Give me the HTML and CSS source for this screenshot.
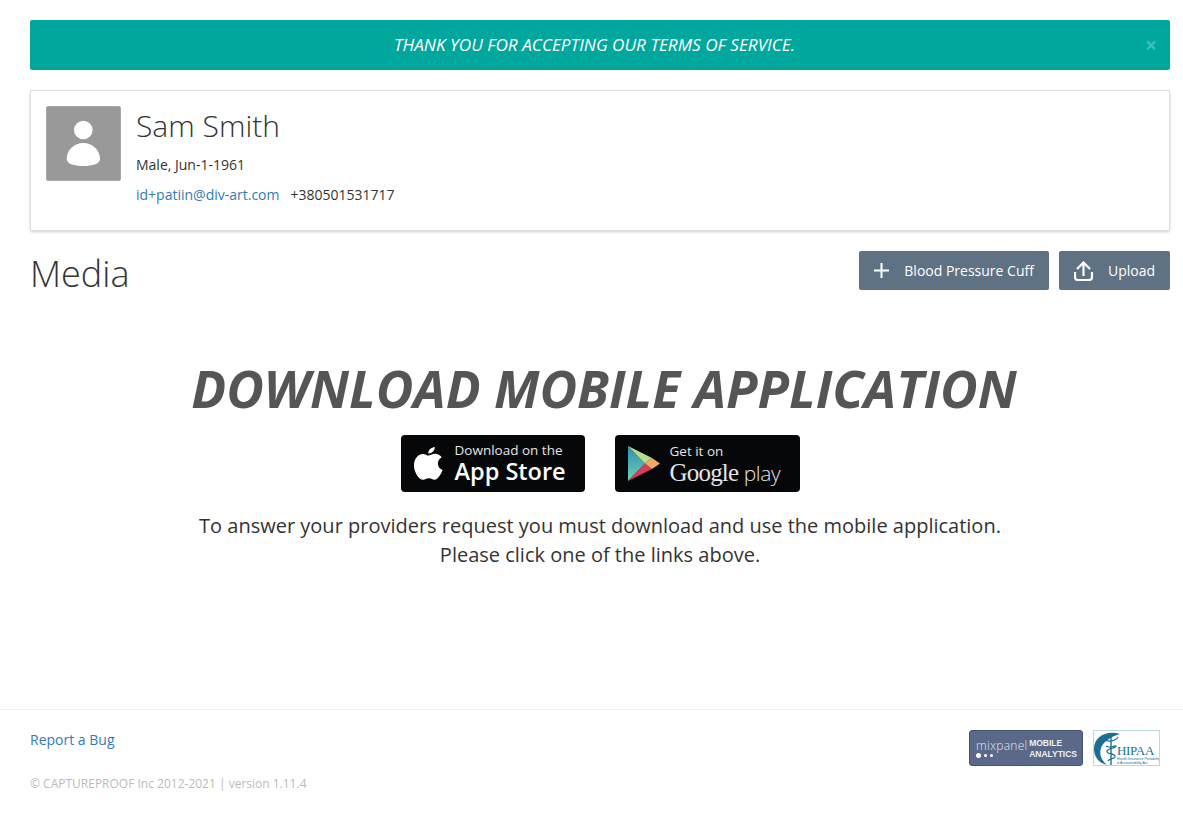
FILE: index.html
```html
<!DOCTYPE html>
<html lang="en">
<head>
    <meta charset="UTF-8">
    <meta name="viewport" content="width=device-width, initial-scale=1.0">
    <title>Media</title>
    <link rel="stylesheet" href="styles.css">
</head>
<body>
    <div class="page">
        <div class="alert">
            <span class="alert-text">THANK YOU FOR ACCEPTING OUR TERMS OF SERVICE.</span>
            <span class="alert-close">&times;</span>
        </div>

        <div class="patient-card">
            <div class="avatar">
                <svg width="73" height="73" viewBox="1 1 73 73">
                    <circle cx="37.300" cy="24" r="9.300" fill="#fff"/>
                    <path d="M20.700 53C20.700 44 28 37 37.300 37S54 44 54 53C54 58 46 60 37.300 60S20.700 58 20.700 53Z" fill="#fff"/>
                </svg>
            </div>
            <div class="patient-info">
                <div class="patient-name">Sam Smith</div>
                <div class="patient-meta">Male, Jun-1-1961</div>
                <div class="patient-contact">
                    <a href="#" class="link">id+patiin@div-art.com</a>
                    <span>+380501531717</span>
                </div>
            </div>
        </div>

        <div class="title-row">
            <h1>Media</h1>
            <div class="actions">
                <button class="btn">
                    <svg width="15" height="15" viewBox="0 0 15 15"><path d="M7.500 0v15M0 7.500h15" stroke="#fff" stroke-width="2" fill="none"/></svg>
                    Blood Pressure Cuff
                </button>
                <button class="btn">
                    <svg width="20" height="20" viewBox="0 0 20 20"><path d="M3 8L9.500 1.500 16 8M9.500 2v13M1 11v5q0 3 3 3h11q3 0 3-3v-5" stroke="#fff" stroke-width="2.200" fill="none"/></svg>
                    Upload
                </button>
            </div>
        </div>

        <div class="download">
            <h2>DOWNLOAD MOBILE APPLICATION</h2>
            <div class="stores">
                <a href="#" class="store store-apple">
                    <svg width="31" height="35" viewBox="0 0 32 36"><path d="M22.500 1c.2 3.600-3.300 7-6.700 6.700C15.500 4.300 19 1.200 22.500 1ZM16 9.800c1.500 0 3.600-1.900 6.800-1.900 2.600 0 5.200 1.300 6.800 3.600-5.700 3.300-4.800 11 1 13.300-1.600 4-5 10-8.300 10-2.400 0-3-1.500-5.900-1.500s-3.700 1.500-5.900 1.500C5.800 34.800 1 26.500 1 20 1 12.800 5.600 8.100 10.300 8.100 12.500 8.100 14.600 9.800 16 9.800Z" fill="#fff"/></svg>
                    <span class="store-text">
                        <span class="store-small">Download on the</span>
                        <span class="store-big">App Store</span>
                    </span>
                </a>
                <a href="#" class="store store-google">
                    <svg width="34" height="37" viewBox="0 0 34 37">
                        <defs>
                            <linearGradient id="play-left" x1="0" y1="0" x2="0" y2="1">
                                <stop offset="0" stop-color="#2c8fb3"/>
                                <stop offset="1" stop-color="#6fd0b4"/>
                            </linearGradient>
                        </defs>
                        <path d="M1 1L18 18.500 1 36Z" fill="url(#play-left)"/>
                        <path d="M1 1L25 13 18 18.500Z" fill="#b3dd90"/>
                        <path d="M1 36L25 24 18 18.500Z" fill="#d2405f"/>
                        <path d="M25 13L33 18.500 25 24 18 18.500Z" fill="#f6a965"/>
                    </svg>
                    <span class="store-text google-text">
                        <span class="store-small">Get it on</span>
                        <span class="google-big">Google <span class="google-play">play</span></span>
                    </span>
                </a>
            </div>
            <p>To answer your providers request you must download and use the mobile application.<br>Please click one of the links above.</p>
        </div>
    </div>

    <footer class="footer">
        <div class="footer-left">
            <a href="#" class="link">Report a Bug</a>
            <div class="copyright">© CAPTUREPROOF Inc 2012-2021 | version 1.11.4</div>
        </div>
        <div class="badges">
            <div class="mixpanel">
                <div class="mix-left">
                    <span class="mix-name">mixpanel</span>
                    <span class="mix-dots"><i></i><i></i><i></i></span>
                </div>
                <div class="mix-right">MOBILE<br>ANALYTICS</div>
            </div>
            <div class="hipaa">
                <svg width="32" height="34" viewBox="0 0 32 34">
                    <path d="M26 3C12-1 0 6 0 18 0 26 5 32 13 34 7 29 5 23 7 17 9 11 16 6 26 3Z" fill="#1c6f93"/>
                    <path d="M17 5v29" stroke="#1c6f93" stroke-width="1.400"/>
                    <path d="M10 8c3 3 11 3 14-2M12 15c4 3 7-1 10 0-1 3-8 2-9 5s7 2 8 5-6 2-7 5" stroke="#1c6f93" stroke-width="1.200" fill="none"/>
                </svg>
                <div class="hipaa-text">
                    <span class="hipaa-name">HIPAA</span>
                    <span class="hipaa-sub">Health Insurance Portability<br>&amp; Accountability Act</span>
                </div>
            </div>
        </div>
    </footer>
</body>
</html>
```

FILE: styles.css
```css
html, body {
    margin: 0;
    padding: 0;
}
body {
    font-family: "Open Sans", sans-serif;
    font-size: 14px;
    color: #333;
    background: #fff;
    height: 829px;
    overflow: hidden;
}
.page {
    padding: 20px 13px 0 30px;
    height: 689px;
}
.link {
    color: #337ab7;
    text-decoration: none;
}

/* alert */
.alert {
    position: relative;
    height: 50px;
    line-height: 50px;
    padding-right: 11px;
    background: #00a79d;
    border-radius: 2px;
    text-align: center;
    color: #fff;
    font-size: 17.200px;
    font-style: italic;
}
.alert-close {
    position: absolute;
    top: 0;
    right: 13px;
    font-size: 21px;
    font-weight: 700;
    font-style: normal;
    color: #fff;
    opacity: 0.25;
}

/* patient card */
.patient-card {
    display: flex;
    gap: 15px;
    height: 139px;
    margin-top: 20px;
    padding: 0 15px;
    border: 1px solid #ddd;
    border-radius: 2px;
    box-shadow: 0 1px 3px rgba(0, 0, 0, 0.18);
}
.avatar {
    width: 73px;
    height: 73px;
    margin-top: 15px;
    background: #999;
    border: 1px solid #aaa;
    border-radius: 2px;
}
.avatar svg {
    display: block;
}
.patient-name {
    margin-top: 15px;
    font-size: 30px;
    font-weight: 300;
    line-height: 40px;
}
.patient-meta {
    margin-top: 9px;
    line-height: 20px;
}
.patient-contact {
    display: flex;
    gap: 11px;
    margin-top: 10px;
    line-height: 20px;
}

/* heading */
.title-row {
    display: flex;
    justify-content: space-between;
    align-items: flex-start;
    margin-top: 20px;
}
h1 {
    margin: 0;
    font-size: 36px;
    font-weight: 300;
    line-height: 46px;
}
.actions {
    display: flex;
    gap: 10px;
}
.btn {
    display: flex;
    align-items: center;
    height: 39px;
    padding: 0 15px;
    border: none;
    border-radius: 2px;
    background: #5f7284;
    color: #fff;
    font-family: inherit;
    font-size: 14px;
}
.btn svg {
    margin-right: 15px;
}
.btn svg[width="20"] {
    margin-right: 14px;
}

/* download block */
.download {
    margin-top: 63px;
    text-align: center;
}
h2 {
    margin: 0;
    padding-left: 8px;
    font-size: 51.600px;
    font-weight: 700;
    font-style: italic;
    line-height: 56px;
    color: #555;
}
.stores {
    display: flex;
    justify-content: center;
    gap: 30px;
    margin-top: 19px;
}
.store {
    display: flex;
    align-items: center;
    height: 57px;
    background: #060708;
    border-radius: 4px;
    color: #fff;
    text-decoration: none;
    text-align: left;
}
.store-apple {
    width: 184px;
}
.store-apple svg {
    margin-left: 12px;
    margin-right: 11px;
}
.store-google {
    width: 185px;
}
.store-google svg {
    margin-left: 12px;
    margin-right: 9px;
}
.store-text {
    display: flex;
    flex-direction: column;
}
.store-small {
    font-size: 13.500px;
    line-height: 16px;
    color: #e4e4e4;
}
.store-big {
    font-size: 23.500px;
    font-weight: 600;
    line-height: 27px;
}
.google-text {
    padding-top: 2px;
}
.google-big {
    font-family: "Liberation Serif", serif;
    font-size: 25px;
    line-height: 28px;
    letter-spacing: -0.8px;
    color: #e4e4e4;
    white-space: nowrap;
}
.google-play {
    font-family: "Open Sans", sans-serif;
    font-weight: 300;
    font-size: 21px;
    letter-spacing: -0.4px;
}
.download p {
    margin: 19px 0 0;
    font-size: 20px;
    line-height: 29px;
}

/* footer */
.footer {
    display: flex;
    justify-content: space-between;
    height: 119px;
    margin: 0;
    padding: 20px 23px 0 30px;
    border-top: 1px solid #eee;
}
.footer-left {
    line-height: 20px;
}
.copyright {
    margin-top: 24px;
    font-size: 12px;
    color: #bbb;
}
.badges {
    display: flex;
    gap: 10px;
    align-items: flex-start;
}
.mixpanel {
    display: flex;
    justify-content: space-between;
    align-items: center;
    width: 114px;
    height: 36px;
    box-sizing: border-box;
    padding: 0 5px 0 6px;
    background: #5a6889;
    border: 1px solid #47536e;
    border-radius: 3px;
    color: #fff;
}
.mix-left {
    display: flex;
    flex-direction: column;
    gap: 1px;
}
.mix-name {
    font-size: 12px;
    font-weight: 300;
    line-height: 13px;
    letter-spacing: 0.3px;
    color: #e6e9f0;
}
.mix-dots {
    display: flex;
    align-items: center;
    gap: 3px;
}
.mix-dots i {
    display: block;
    width: 3px;
    height: 3px;
    border-radius: 50%;
    background: #fff;
}
.mix-dots i:first-child {
    width: 5px;
    height: 5px;
}
.mix-right {
    margin-top: 1px;
    font-family: "Liberation Sans", sans-serif;
    font-size: 8.500px;
    font-weight: 700;
    line-height: 11px;
    color: #eef0f5;
    white-space: nowrap;
}
.hipaa {
    display: flex;
    width: 67px;
    height: 36px;
    box-sizing: border-box;
    border: 1px solid #bcd6e2;
    overflow: hidden;
}
.hipaa svg {
    flex: none;
}
.hipaa-text {
    display: flex;
    flex-direction: column;
    margin-left: -9px;
    padding-top: 13px;
    color: #1c6f93;
}
.hipaa-name {
    font-family: "Liberation Serif", serif;
    font-size: 13px;
    line-height: 13px;
    letter-spacing: -0.3px;
}
.hipaa-sub {
    font-family: "Liberation Sans", sans-serif;
    font-size: 3.500px;
    line-height: 4px;
    white-space: nowrap;
}
```
